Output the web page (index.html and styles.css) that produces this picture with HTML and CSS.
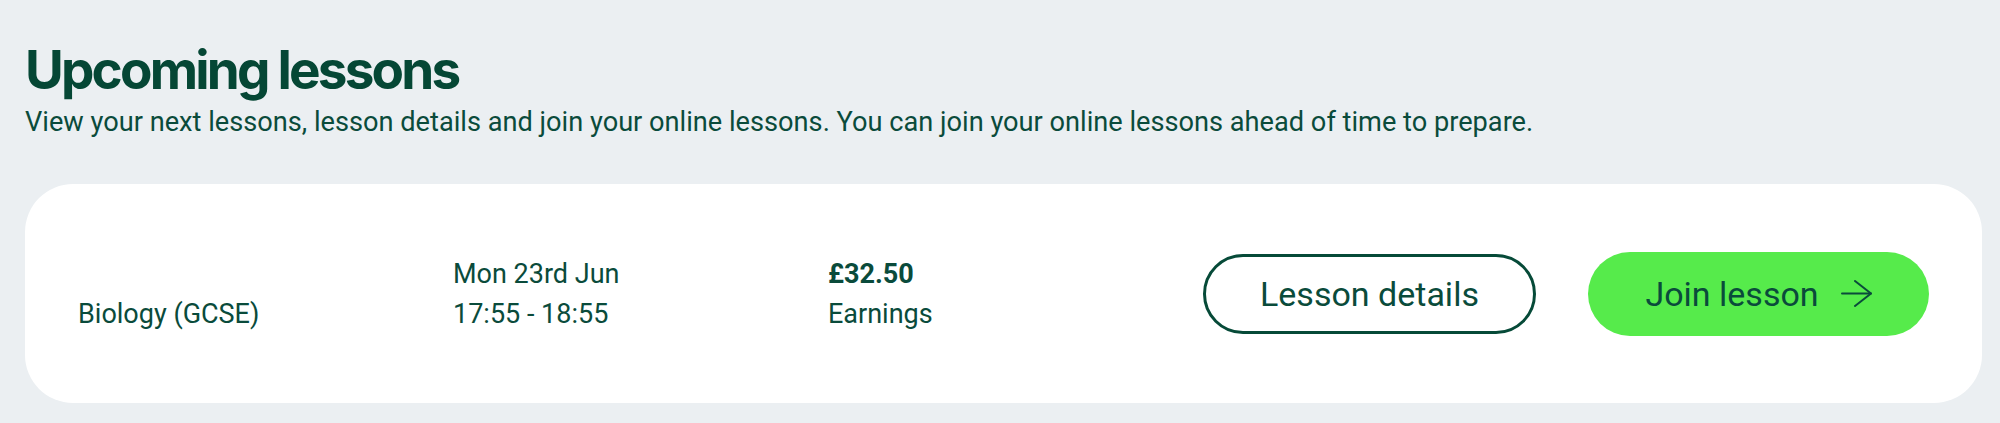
FILE: index.html
```html
<!DOCTYPE html>
<html lang="en">
<head>
	<meta charset="UTF-8">
	<title>Upcoming lessons</title>
	<link rel="stylesheet" href="styles.css">
</head>
<body>
	<div class="page">
		<h1 class="title">Upcoming lessons</h1>
		<p class="intro">View your next lessons, lesson details and join your online lessons. You can join your online lessons ahead of time to prepare.</p>

		<div class="lesson">
			<div class="info">
				<div class="col">
					<span class="line">Biology (GCSE)</span>
				</div>
				<div class="col">
					<span class="line">Mon 23rd Jun</span>
					<span class="line">17:55 - 18:55</span>
				</div>
				<div class="col">
					<span class="line price">£32.50</span>
					<span class="line">Earnings</span>
				</div>
			</div>
			<div class="actions">
				<button class="btn btnOutline">Lesson details</button>
				<button class="btn btnJoin">Join lesson
					<svg class="arrow" width="31" height="27" viewBox="0 0 31 27" fill="none" stroke="currentColor" stroke-width="2" stroke-linecap="round" stroke-linejoin="round">
						<path d="M1 13.5h29"/>
						<path d="M14 1l16 12.5-16 12.5"/>
					</svg>
				</button>
			</div>
		</div>
	</div>
</body>
</html>
```

FILE: styles.css
```css
*{
	margin:0;
	padding:0;
	box-sizing: border-box;
}
body{
	background: #ebeff2;
	color: #0a4b3b;
	font-family: Roboto, "Liberation Sans", sans-serif;
}
.page{
	padding: 38px 18px 0 25px;
}
.title{
	font-family: Inter, "Liberation Sans", sans-serif;
	font-weight: 700;
	font-size: 53px;
	line-height: 64px;
	letter-spacing: -2.8px;
	color: #054735;
}
.intro{
	font-size: 27.2px;
	line-height: 36px;
	margin-top: 2px;
}
.lesson{
	display: flex;
	align-items: center;
	justify-content: space-between;
	margin-top: 44px;
	height: 219px;
	padding: 0 53px;
	background: #fff;
	border-radius: 48px;
}
.info{
	display: flex;
	align-items: flex-end;
}
.col{
	display: flex;
	flex-direction: column;
	width: 375px;
}
.line{
	font-size: 27px;
	line-height: 40px;
}
.price{
	font-weight: 700;
}
.actions{
	display: flex;
	align-items: center;
	gap: 52px;
}
.btn{
	display: flex;
	align-items: center;
	justify-content: center;
	border-radius: 42px;
	font-family: Roboto, "Liberation Sans", sans-serif;
	font-size: 34px;
	color: #0a4b3b;
	cursor: pointer;
}
.btnOutline{
	width: 333px;
	height: 80px;
	background: #fff;
	border: 3px solid #064a38;
}
.btnJoin{
	width: 341px;
	height: 84px;
	background: #56eb4b;
	border: none;
	gap: 22px;
}
.arrow{
	display: block;
}
```
